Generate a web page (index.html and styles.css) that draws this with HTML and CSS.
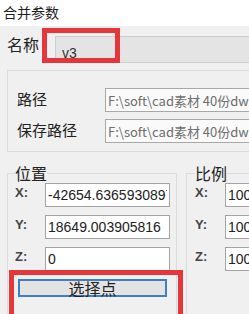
FILE: index.html
```html
<!DOCTYPE html>
<html>
<head>
    <title>合并参数</title>
    <link rel="stylesheet" href="styles.css">
</head>
<body>
    <div class="dialog">
        <div class="title">合并参数</div>

        <div class="name-row">
            <span class="name-label">名称</span>
            <input class="field name-field" value="v3" readonly>
        </div>

        <fieldset class="group paths">
            <div class="path-row">
                <label>路径</label>
                <input class="field path-field" value="F:\soft\cad素材 40份dwg图纸" readonly>
            </div>
            <div class="path-row">
                <label>保存路径</label>
                <input class="field path-field" value="F:\soft\cad素材 40份dwg图纸" readonly>
            </div>
        </fieldset>

        <div class="groups">
            <fieldset class="group pos">
                <legend>位置</legend>
                <div class="xyz-row"><label>X:</label><input class="field num-field" value="-42654.6365930897"></div>
                <div class="xyz-row"><label>Y:</label><input class="field num-field" value="18649.003905816"></div>
                <div class="xyz-row"><label>Z:</label><input class="field num-field" value="0"></div>
                <button class="pick">选择点</button>
            </fieldset>

            <fieldset class="group scale">
                <legend>比例</legend>
                <div class="xyz-row"><label>X:</label><input class="field num-field" value="100"></div>
                <div class="xyz-row"><label>Y:</label><input class="field num-field" value="100"></div>
                <div class="xyz-row"><label>Z:</label><input class="field num-field" value="100"></div>
            </fieldset>
        </div>

        <!-- red annotation frames drawn over the dialog -->
        <span class="mark mark-name"></span>
        <span class="mark mark-pick"></span>
    </div>
</body>
</html>
```

FILE: styles.css
```css
body {
    margin: 0;
    width: 249px;
    height: 314px;
    overflow: hidden;
    background-color: #f0f0f0;
    font-family: "Noto Sans CJK SC", "Noto Sans", sans-serif;
    color: #222;
}
.dialog {
    position: relative;
    width: 249px;
    height: 314px;
    overflow: hidden;
}
.title {
    height: 26px;
    padding-left: 3px;
    background-color: #fff;
    font-size: 14px;
    line-height: 24px;
    color: #1e1e1e;
}
.name-row {
    display: flex;
    align-items: flex-start;
    padding: 10px 0 0 7px;
}
.name-label {
    width: 48px;
    margin-top: -4px;
    font-size: 16px;
    line-height: 24px;
    flex: none;
}
.field {
    box-sizing: border-box;
    height: 24px;
    margin: 0;
    padding: 0 2px;
    border: 1px solid #a3a3a3;
    background-color: #fff;
    font-family: "Liberation Sans", "Noto Sans CJK SC", sans-serif;
    font-size: 14px;
    color: #222;
    outline: none;
    flex: none;
}
.name-field {
    width: 220px;
    height: 27px;
    padding: 6px 0 0 6px;
    border-color: #cdcdcd;
    background-color: #e4e4e4;
    color: #333;
}
.group {
    margin: 0;
    min-width: 0;
    border: 1px solid #dcdcdc;
    box-sizing: border-box;
}
.group legend {
    padding: 0;
    font-size: 16px;
    line-height: 16px;
    color: #222;
}
.paths {
    width: 260px;
    margin: 7px 0 0 7px;
    padding: 17px 0 8px 9px;
    display: flex;
    flex-direction: column;
    gap: 7px;
}
.path-row {
    display: flex;
    align-items: center;
}
.path-row label {
    width: 88px;
    margin-top: -3px;
    font-size: 15px;
    flex: none;
}
.path-field {
    width: 160px;
    background-color: #fafafa;
    border-color: #a8a8a8;
    color: #6d6d6d;
    font-family: "Noto Sans CJK SC", sans-serif;
    font-size: 13px;
}
.groups {
    display: flex;
    gap: 9px;
    margin: 13px 0 0 7px;
}
.pos {
    width: 170px;
    padding: 2px 6px 0 7px;
    flex: none;
}
.scale {
    width: 100px;
    padding: 2px 0 0 8px;
    flex: none;
}
.xyz-row {
    display: flex;
    align-items: flex-start;
    margin-bottom: 8px;
}
.xyz-row label {
    width: 30px;
    margin-top: 2px;
    font-family: "Liberation Sans", sans-serif;
    font-size: 13px;
    line-height: 15px;
    font-weight: bold;
    color: #444;
    flex: none;
}
.num-field {
    flex: 1;
    min-width: 0;
}
.scale .num-field {
    flex: none;
    width: 60px;
}
.pick {
    display: block;
    box-sizing: border-box;
    width: 149px;
    height: 18px;
    margin: 4px 0 30px 3px;
    padding: 0;
    border: 2px solid #3d7fc1;
    background-color: #e3e3e3;
    font-family: "Noto Sans CJK SC", sans-serif;
    font-size: 16px;
    line-height: 14px;
    color: #222;
}
.mark {
    position: absolute;
    box-sizing: border-box;
    border: 5px solid #e5363b;
}
.mark-name {
    left: 42px;
    top: 28px;
    width: 78px;
    height: 35px;
}
.mark-pick {
    left: 9px;
    top: 270px;
    width: 174px;
    height: 60px;
}
```
